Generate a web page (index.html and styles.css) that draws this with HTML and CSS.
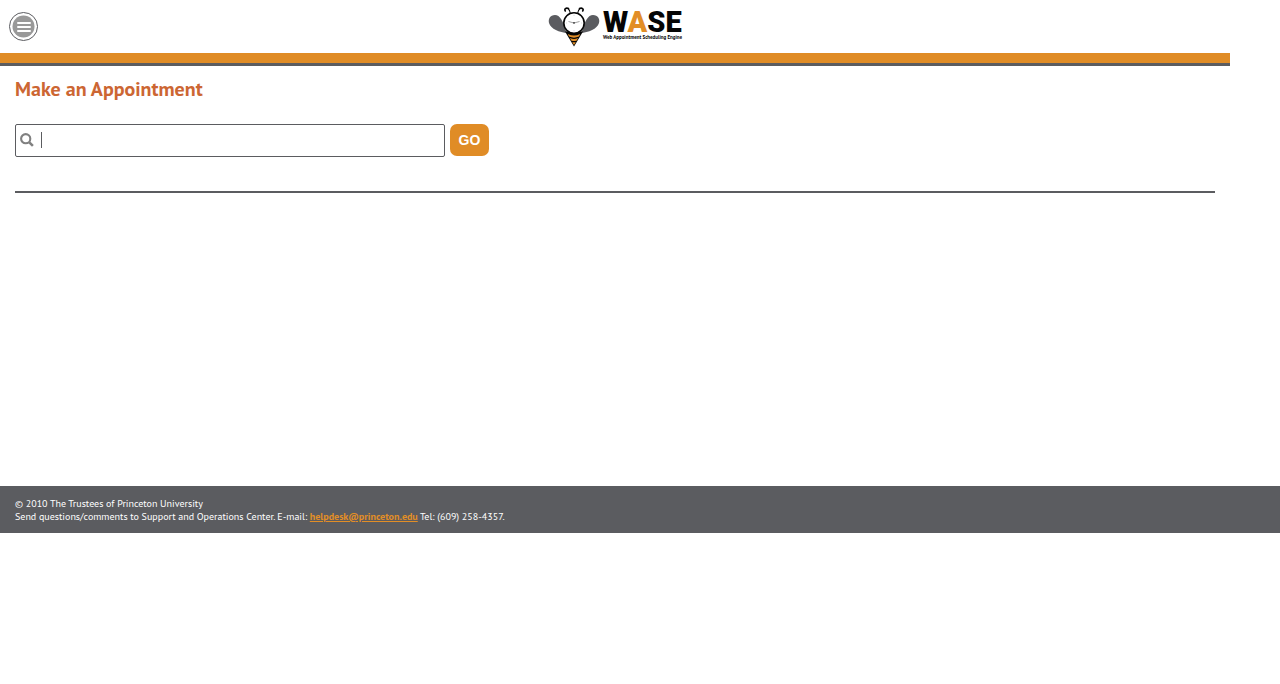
FILE: index.html
```html
<!DOCTYPE html>
<html lang="en">
<head>
<meta charset="utf-8">
<meta name="viewport" content="width=device-width, initial-scale=1">
<title>WASE - Make an Appointment</title>
<link rel="stylesheet" href="styles.css">
</head>
<body>
<div class="page">
  <header class="header">
    <button class="menu" type="button" aria-label="Menu">
      <svg class="menu-icon" viewBox="0 0 29 29" aria-hidden="true">
        <circle cx="14.5" cy="14.5" r="14" fill="#fff" stroke="#5b5c60"/>
        <circle cx="14.5" cy="14.5" r="11" fill="#999"/>
        <path d="M9 11h12M9 15h12M9 19h12" stroke="#fff" stroke-width="2" stroke-linecap="round"/>
      </svg>
    </button>
    <a class="logo" href="#">
      <svg class="bee" viewBox="0 0 52 40" aria-hidden="true">
        <path d="M18 24C15 14 12 8 7 8C2 8 0 12 1 16C3 22 11 25.500 20 26Z" fill="#5b5c60"/>
        <path d="M34 24C37 14 40 8 45 8C50 8 52 12 51 16C49 22 41 25.500 32 26Z" fill="#5b5c60"/>
        <path d="M17 24.500L26 39.500L35 24.500Z" fill="#050505"/>
        <path d="M19.800 27Q26 30 32.200 27L31 29.600Q26 31.800 21 29.600ZM22 31Q26 33 30 31L28.800 33.500Q26 34.500 23.200 33.500ZM24.200 35.200H27.800L26 38Z" fill="#e28e26"/>
        <path d="M22.500 7Q22 3 20 1.500M29.500 7Q30 3 32 1.500" fill="none" stroke="#050505" stroke-width="1.100"/>
        <path d="M20.500 1.500C18 .3 16 2.200 17.300 4M31.500 1.500C34 .3 36 2.200 34.700 4" fill="none" stroke="#050505" stroke-width="1.600" stroke-linecap="round"/>
        <circle cx="26" cy="16" r="10.200" fill="#fff" stroke="#050505" stroke-width="1.600"/>
        <path d="M20.500 14.500L26 16L31.500 14.500" fill="none" stroke="#777" stroke-width=".7"/>
        <circle cx="26" cy="15.900" r=".8" fill="#222"/>
        <path d="M26 7.700v1.200M26 23.100v1.200M17.900 16h1M33.100 16h1" stroke="#bbb" stroke-width=".6"/>
      </svg>
      <span class="wordmark">
        <span class="name">W<span class="accent">A</span>SE</span>
        <span class="tagline">Web Appointment Scheduling Engine</span>
      </span>
    </a>
  </header>
  <main class="content">
    <h1 class="title">Make an Appointment</h1>
    <form class="search">
      <div class="field">
        <svg class="search-icon" viewBox="0 0 14 14" aria-hidden="true">
          <circle cx="5.700" cy="5.700" r="4.600" fill="none" stroke="#808080" stroke-width="2.100"/>
          <path d="M9.300 9.300L12.900 12.900" stroke="#808080" stroke-width="2.500"/>
        </svg>
        <span class="divider"></span>
        <input class="input" type="text" aria-label="Search">
      </div>
      <button class="go" type="submit">GO</button>
    </form>
    <hr class="rule">
  </main>
</div>
<footer class="footer">
  <p class="line">© 2010 The Trustees of Princeton University</p>
  <p class="line">Send questions/comments to Support and Operations Center. E-mail: <a class="mail" href="mailto:helpdesk@princeton.edu">helpdesk@princeton.edu</a> Tel: (609) 258-4357.</p>
</footer>
</body>
</html>
```
FILE: styles.css
```css
* {
  box-sizing: border-box;
}

body {
  margin: 0;
  background: #fff;
  font-family: "PT Sans", "Noto Sans", sans-serif;
}

.page {
  min-height: 486px;
  margin-right: 50px;
}

.header {
  display: grid;
  grid-template-columns: 1fr auto 1fr;
  align-items: center;
  height: 66px;
  padding: 0 9px 10px;
  border-bottom: 3px solid #5b5c60;
  background: linear-gradient(#e08c26, #e08c26) bottom / 100% 10px no-repeat;
}

.menu {
  justify-self: start;
  padding: 0;
  border: 0;
  background: none;
}

.menu-icon {
  display: block;
  width: 29px;
  height: 29px;
}

.logo {
  display: flex;
  align-items: flex-start;
  gap: 3px;
  color: #050505;
  text-decoration: none;
}

.bee {
  width: 52px;
  height: 40px;
}

.wordmark {
  display: flex;
  flex-direction: column;
  padding-top: 3px;
  font-family: Roboto, sans-serif;
}

.name {
  font-size: 29px;
  font-weight: 900;
  line-height: 25px;
}

.accent {
  color: #e28e26;
}

.tagline {
  font-family: "PT Sans", "Noto Sans", sans-serif;
  font-size: 5px;
  font-weight: 700;
  line-height: 5px;
  white-space: nowrap;
}

.content {
  padding: 10px 15px 0;
}

.title {
  margin: 0;
  color: #cc6633;
  font-size: 20px;
  font-weight: 700;
  line-height: 26px;
}

.search {
  display: flex;
  gap: 5px;
  margin-top: 22px;
}

.field {
  display: flex;
  align-items: center;
  width: 430px;
  height: 33px;
  padding: 0 4px 1px;
  border: 1px solid #5b5c60;
  border-radius: 2px;
}

.search-icon {
  width: 14px;
  height: 14px;
}

.divider {
  width: 1px;
  height: 16px;
  margin-left: 7px;
  background: #5b5c60;
}

.input {
  flex: 1;
  min-width: 0;
  height: 100%;
  padding: 0;
  border: 0;
  outline: 0;
  background: none;
  font: 14px "Liberation Sans", sans-serif;
}

.go {
  width: 39px;
  height: 32px;
  padding: 0;
  border: 0;
  border-radius: 7px;
  background: #e08c26;
  color: #fff;
  font: bold 14px "Liberation Sans", sans-serif;
}

.rule {
  height: 2px;
  margin: 34px 0 0;
  border: 0;
  background: #5b5c60;
}

.footer {
  padding: 11px 15px 10px;
  background: #5b5c60;
  color: #fff;
  font-size: 10px;
  line-height: 13px;
}

.line {
  margin: 0;
}

.mail {
  color: #e28e26;
  font-weight: 700;
}
```
